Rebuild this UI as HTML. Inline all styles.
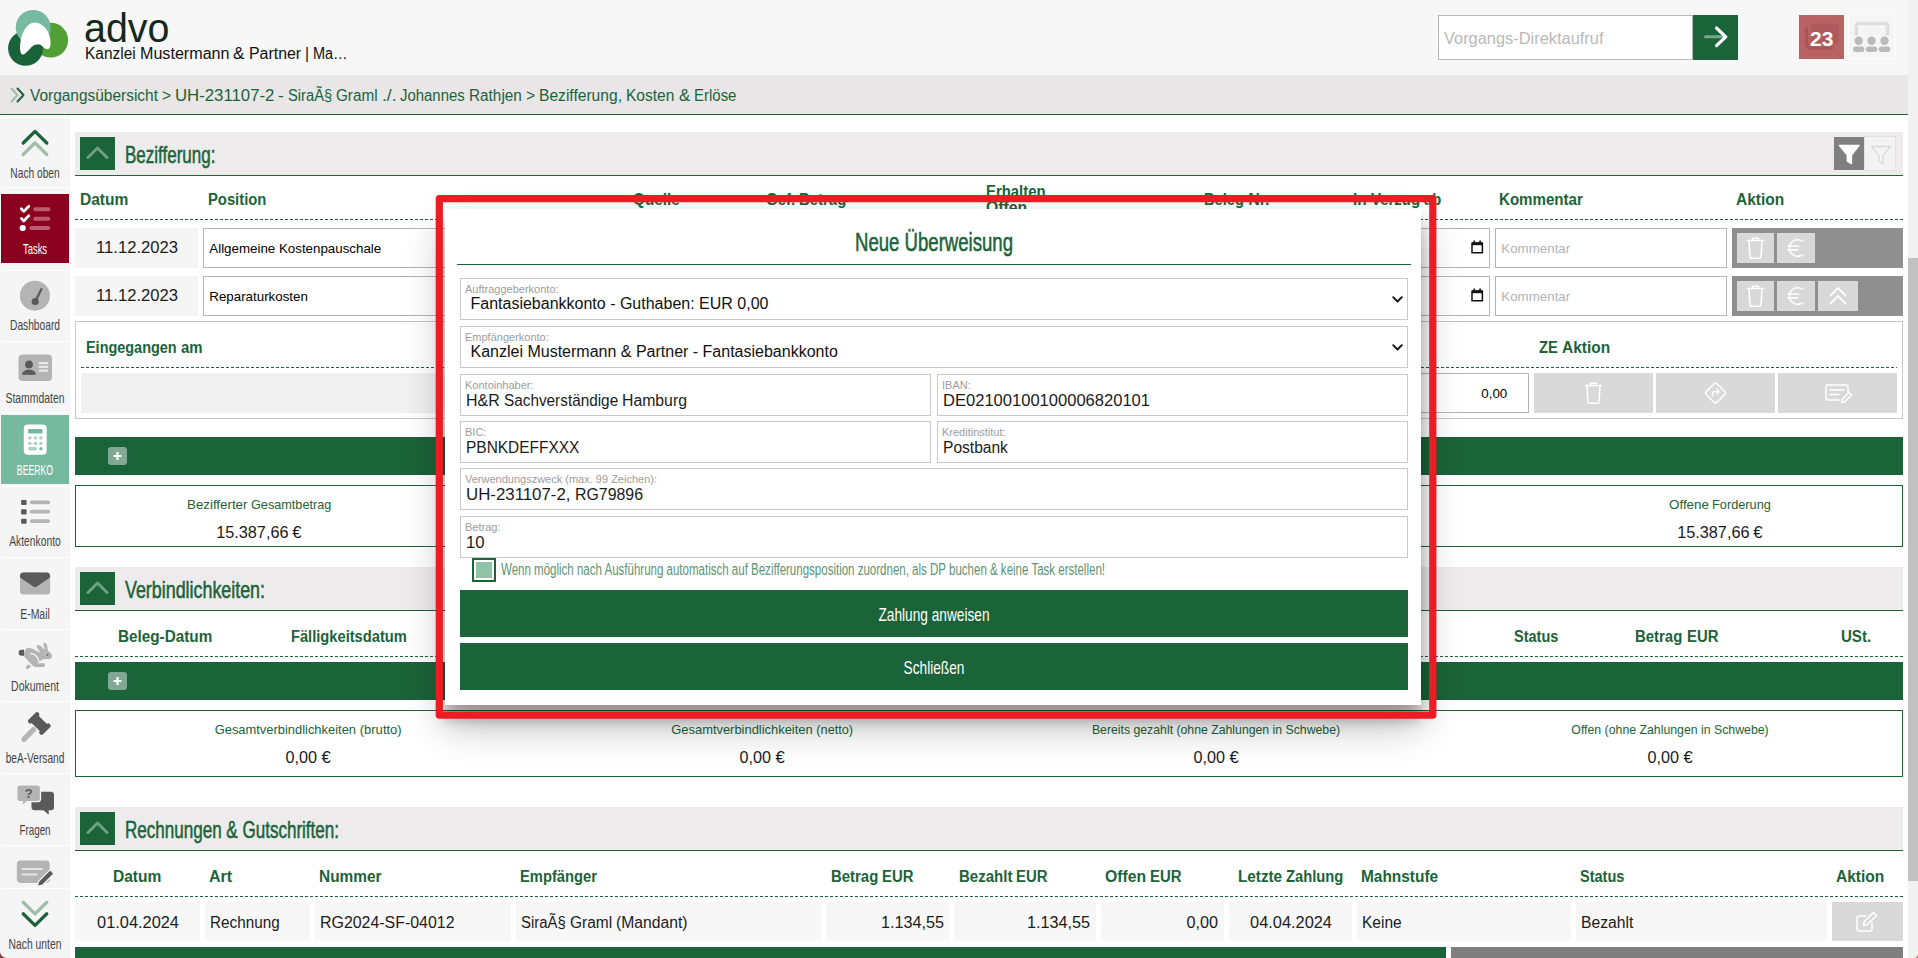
<!DOCTYPE html>
<html lang="de"><head><meta charset="utf-8"><title>advo - Bezifferung, Kosten &amp; Erlöse</title>
<style>
html,body{margin:0;padding:0;}
body{width:1918px;height:958px;overflow:hidden;background:#fff;position:relative;font-family:"Liberation Sans", sans-serif;}
.b{position:absolute;margin:0;padding:0;}
.t{position:absolute;white-space:pre;line-height:1;font-family:"Liberation Sans", sans-serif;}
.w{display:inline-block;transform-origin:0 50%;}
.dash{height:1px;background:repeating-linear-gradient(90deg,#1b6339 0 3px,transparent 3px 5px);}
.modal{background:#fff;box-shadow:0 19px 38px rgba(0,0,0,.30),0 15px 12px rgba(0,0,0,.22);}
svg{position:absolute;overflow:visible;}
</style></head>
<body>
<header class="b" style="left:0;top:0;width:1908px;height:75px;background:#f7f7f7">
<svg style="left:0;top:0" width="76" height="75" viewBox="0 0 76 75"><circle cx="50.700" cy="40.200" r="17.400" fill="#52a035"/><circle cx="25.600" cy="48.300" r="17.500" fill="#1a6338"/><circle cx="33.100" cy="27.400" r="17.400" fill="#76bba1"/><path d="M34.500 22.600C39 22.400 43.800 26 46.500 29.500C49 32.700 50.600 38 50.600 43C50.600 47 49.200 49.300 47.300 49.200C45 49.100 43.500 46.800 41.500 45.400C39.500 44 36.500 43.800 34 45.300C30.500 47.500 28.500 51 25.500 53.300C23.500 54.900 21.800 55 20.900 53C19.600 50 19.900 44 21 39C22.500 32 27 22.900 34.500 22.600Z" fill="#fff"/></svg>
<span class="t" style="left:84.3px;top:8.3px;font-size:40px;color:#14281b;transform-origin:0 50%;transform:scaleX(0.9856);">advo</span>
<span class="t" style="left:85.0px;top:45.9px;font-size:16px;color:#111;word-spacing:-0.36px;"><span class="w" style="width:50.73px;transform:scaleX(0.9667)">Kanzlei</span> <span class="w" style="width:89.50px;transform:scaleX(1.0065)">Mustermann</span> <span class="w" style="width:11.41px;transform:scaleX(1.0688)">&amp;</span> <span class="w" style="width:52.08px;transform:scaleX(0.9926)">Partner</span> <span class="w" style="width:4.02px;transform:scaleX(0.9662)">|</span> <span class="w" style="width:34.58px;transform:scaleX(0.9044)">Ma…</span></span>
<div class="b" style="left:1438px;top:15px;width:255px;height:45px;background:#fff;border:1px solid #b9b9b9;box-sizing:border-box"></div>
<span class="t" style="left:1444.3px;top:30.5px;font-size:16px;color:#b9b9b9;transform-origin:0 50%;transform:scaleX(1.0248);">Vorgangs-Direktaufruf</span>
<div class="b" style="left:1693px;top:15px;width:45px;height:45px;background:#1b6339;"><svg style="left:0px;top:0px" width="45" height="45" viewBox="0 0 45 45"><path d="M12.500 21.800H30" stroke="#fff" stroke-opacity=".42" stroke-width="3" stroke-linecap="round" fill="none"/><path d="M23.500 13L32.800 21.800L23.500 30.600" stroke="#fff" stroke-width="3.200" stroke-linecap="round" stroke-linejoin="round" fill="none"/></svg></div>
<div class="b" style="left:1799px;top:15px;width:45px;height:44px;background:#b96263;"><svg style="left:0px;top:0px" width="45" height="44" viewBox="0 0 45 44"><rect x="11.700" y="8.600" width="28.200" height="19.800" rx="3.500" fill="#ad595d"/><path d="M7.500 13.500v14.500a5 5 0 0 0 5 5h20.500" fill="none" stroke="#a95459" stroke-width="3.200" stroke-linecap="round"/><path d="M30.500 16l8-5" stroke="#b96263" stroke-width="1.300"/></svg></div>
<span class="t" style="left:1821.7px;top:27.8px;font-size:21px;font-weight:700;color:#fff;transform:translateX(-50%) scaleX(1.0000);">23</span>
<div class="b" style="left:1848px;top:14.4px;width:47px;height:45px;background:#f5f5f5;border:1px solid #fdfdfd;box-sizing:border-box"><svg style="left:-1px;top:0px" width="47" height="45" viewBox="0 0 47 45"><path d="M8.300 20.600V11a2.500 2.500 0 0 1 2.500-2.500h26.200a2.500 2.500 0 0 1 2.500 2.500v9.600" fill="none" stroke="#dedede" stroke-width="3.600"/><circle cx="10.7" cy="25.800" r="4.200" fill="#bababa"/><rect x="5.0" y="31.500" width="11.400" height="5.600" rx="2.800" fill="#bababa"/><circle cx="23.6" cy="25.800" r="4.200" fill="#bababa"/><rect x="17.9" y="31.500" width="11.400" height="5.600" rx="2.800" fill="#bababa"/><circle cx="36.5" cy="25.800" r="4.200" fill="#bababa"/><rect x="30.8" y="31.500" width="11.400" height="5.600" rx="2.800" fill="#bababa"/></svg></div>
</header>
<div class="b" style="left:0px;top:75px;width:1908px;height:39px;background:#e8e6e6;"></div>
<div class="b" style="left:0px;top:114px;width:1908px;height:1px;background:#1b6339;"></div>
<svg style="left:10px;top:87px" width="16" height="16" viewBox="0 0 16 16"><path d="M1.5 1.5L7.5 8L1.5 14.5" stroke="#9dbfaa" stroke-width="2" fill="none" stroke-linecap="round" stroke-linejoin="round"/><path d="M7.5 1.5L13.5 8L7.5 14.5" stroke="#1b6339" stroke-width="2" fill="none" stroke-linecap="round" stroke-linejoin="round"/></svg>
<span class="t" style="left:29.6px;top:87.5px;font-size:16px;color:#1b6339;word-spacing:-0.42px;"><span class="w" style="width:127.96px;transform:scaleX(0.9655)">Vorgangsübersicht</span> <span class="w" style="width:9.15px;transform:scaleX(0.9788)">&gt;</span> <span class="w" style="width:99.37px;transform:scaleX(1.0474)">UH-231107-2</span> <span class="w" style="width:5.87px;transform:scaleX(1.1010)">-</span> <span class="w" style="width:44.20px;transform:scaleX(0.9203)">SiraÃ§</span> <span class="w" style="width:41.54px;transform:scaleX(0.9536)">Graml</span> <span class="w" style="width:14.58px;transform:scaleX(1.0927)">./.</span> <span class="w" style="width:64.70px;transform:scaleX(0.9324)">Johannes</span> <span class="w" style="width:52.86px;transform:scaleX(0.9583)">Rathjen</span> <span class="w" style="width:9.15px;transform:scaleX(0.9788)">&gt;</span> <span class="w" style="width:82.97px;transform:scaleX(0.9751)">Bezifferung,</span> <span class="w" style="width:48.36px;transform:scaleX(0.9709)">Kosten</span> <span class="w" style="width:11.24px;transform:scaleX(1.0532)">&amp;</span> <span class="w" style="width:42.45px;transform:scaleX(0.9358)">Erlöse</span></span>
<nav class="b" style="left:0;top:116px;width:70px;height:842px;background:#f5f5f5">
</nav>
<div class="b" style="left:1px;top:117px;width:68px;height:1px;background:#fff;"></div>
<div class="b" style="left:1px;top:187px;width:68px;height:1px;background:#fff;"></div>
<div class="b" style="left:1px;top:270px;width:68px;height:1px;background:#fff;"></div>
<div class="b" style="left:1px;top:341px;width:68px;height:1px;background:#fff;"></div>
<div class="b" style="left:1px;top:412px;width:68px;height:1px;background:#fff;"></div>
<div class="b" style="left:1px;top:486px;width:68px;height:1px;background:#fff;"></div>
<div class="b" style="left:1px;top:557px;width:68px;height:1px;background:#fff;"></div>
<div class="b" style="left:1px;top:629px;width:68px;height:1px;background:#fff;"></div>
<div class="b" style="left:1px;top:701px;width:68px;height:1px;background:#fff;"></div>
<div class="b" style="left:1px;top:773px;width:68px;height:1px;background:#fff;"></div>
<div class="b" style="left:1px;top:845px;width:68px;height:1px;background:#fff;"></div>
<div class="b" style="left:1px;top:889px;width:68px;height:1px;background:#fff;"></div>
<div class="b" style="left:1px;top:194px;width:68px;height:69px;background:#8b001e;"></div>
<div class="b" style="left:1px;top:415px;width:68px;height:69px;background:#75b9a0;"></div>
<span class="t" style="left:35.0px;top:165.7px;font-size:14.5px;color:#444;transform:translateX(-50%) scaleX(0.7029);">Nach oben</span>
<span class="t" style="left:35.0px;top:241.7px;font-size:14.5px;color:#fff;transform:translateX(-50%) scaleX(0.6527);">Tasks</span>
<span class="t" style="left:35.0px;top:318.4px;font-size:14.5px;color:#444;transform:translateX(-50%) scaleX(0.7048);">Dashboard</span>
<span class="t" style="left:35.0px;top:390.9px;font-size:14.5px;color:#444;transform:translateX(-50%) scaleX(0.7176);">Stammdaten</span>
<span class="t" style="left:35.0px;top:462.6px;font-size:14.5px;color:#fff;transform:translateX(-50%) scaleX(0.6006);">BEERKO</span>
<span class="t" style="left:35.0px;top:534.4px;font-size:14.5px;color:#444;transform:translateX(-50%) scaleX(0.7097);">Aktenkonto</span>
<span class="t" style="left:35.0px;top:606.8px;font-size:14.5px;color:#444;transform:translateX(-50%) scaleX(0.7203);">E-Mail</span>
<span class="t" style="left:35.0px;top:678.8px;font-size:14.5px;color:#444;transform:translateX(-50%) scaleX(0.7232);">Dokument</span>
<span class="t" style="left:35.0px;top:750.8px;font-size:14.5px;color:#444;transform:translateX(-50%) scaleX(0.7001);">beA-Versand</span>
<span class="t" style="left:35.0px;top:823.0px;font-size:14.5px;color:#444;transform:translateX(-50%) scaleX(0.6790);">Fragen</span>
<svg style="left:0;top:0" width="70" height="958" viewBox="0 0 70 958"><path d="M23.2 143L35 131.4L46.800 143" fill="none" stroke="#1b6339" stroke-width="3.3" stroke-linecap="round" stroke-linejoin="round"/><path d="M23.2 154.500L35 142.900L46.800 154.500" fill="none" stroke="#9dbfaa" stroke-width="3.3" stroke-linecap="round" stroke-linejoin="round"/><path d="M21.3 208.800l2.500 2.600l5-5.200 M21.300 218.400l2.500 2.600l5-5.200" fill="none" stroke="#fff" stroke-width="2.700" stroke-linecap="round" stroke-linejoin="round"/><circle cx="22.700" cy="228" r="3.100" fill="#fff"/><path d="M35.200 209.300h13.200 M35.200 218.700h13.200 M31.400 227.900h17" stroke="#b95c70" stroke-width="4" stroke-linecap="round"/><circle cx="34.900" cy="295.700" r="15" fill="#b4b4b4"/><circle cx="35.200" cy="301.500" r="3.600" fill="#5a5a5a"/><path d="M35.200 301.500L41.300 289.300" stroke="#5a5a5a" stroke-width="2.300" stroke-linecap="round"/><rect x="18.500" y="354.600" width="33.500" height="26.400" rx="4" fill="#b4b4b4"/><circle cx="29" cy="364.400" r="3.900" fill="#5a5a5a"/><path d="M21.900 374.800a7 5.400 0 0 1 14 0z" fill="#5a5a5a"/><path d="M38.800 363.200h9.400 M38.800 366.900h9.400 M38.800 370.600h9.400" stroke="#e6e6e6" stroke-width="2.200"/><rect x="23.800" y="424.600" width="22.900" height="30.200" rx="4" fill="#fff"/><rect x="28.200" y="429" width="14.400" height="4.600" rx="1.200" fill="#74b9a0"/><circle cx="29.9" cy="437.9" r="1.700" fill="#a8d3c1"/><circle cx="35.4" cy="437.9" r="1.700" fill="#a8d3c1"/><circle cx="40.9" cy="437.9" r="1.700" fill="#a8d3c1"/><circle cx="29.9" cy="443.4" r="1.700" fill="#a8d3c1"/><circle cx="35.4" cy="443.4" r="1.700" fill="#a8d3c1"/><circle cx="40.9" cy="443.4" r="1.700" fill="#a8d3c1"/><rect x="28.200" y="447.100" width="8.800" height="3.400" rx="1.700" fill="#a8d3c1"/><circle cx="40.900" cy="448.800" r="1.700" fill="#74b9a0"/><rect x="21.100" y="499.9" width="5.500" height="5.100" rx="1" fill="#5a5a5a"/><path d="M31.700 502.3h16.500" stroke="#b4b4b4" stroke-width="3.800" stroke-linecap="round"/><rect x="21.100" y="509.3" width="5.500" height="5.100" rx="1" fill="#5a5a5a"/><path d="M31.700 511.7h16.500" stroke="#b4b4b4" stroke-width="3.800" stroke-linecap="round"/><rect x="21.100" y="518.7" width="5.500" height="5.100" rx="1" fill="#5a5a5a"/><path d="M31.700 521.1h16.500" stroke="#b4b4b4" stroke-width="3.800" stroke-linecap="round"/><rect x="20" y="572.400" width="30.100" height="22.200" rx="3.500" fill="#b4b4b4"/><path d="M20 575.900a3.500 3.500 0 0 1 3.500-3.500h23.100a3.500 3.500 0 0 1 3.500 3.500v1.500l-13.300 9.200a3 3 0 0 1-3.500 0L20 577.400z" fill="#5a5a5a"/><path d="M24.200 652.500C24.500 650 26.500 648 28.800 648.100C31 648.200 33 649 35 650L40.600 652.900C39 650.500 36.500 647.500 36.600 646C36.800 644.600 39 644.800 40.300 645.700C42 646.900 43.800 648.800 45.200 650C44.300 647.500 43 644.600 43.600 643.300C44.200 642.200 45.600 642.600 46.200 643.600C47.200 645.400 47.800 648 47.900 650.400C49.600 651.400 51.600 653.500 52 655.500C52.400 657.500 51 659.100 49 659.100L43.500 659.200L39.300 661.200L37.300 663.200L43.800 663.200C45.600 663.200 45.600 666.900 43.600 666.900L35.200 666.900C34.200 666.900 33.500 666.500 32.800 665.800L24.800 657.400C24.100 656.600 24 654 24.200 652.500Z" fill="#b4b4b4"/><path d="M26 666.400L28.400 664.300L31.200 666.400L28 669.100C26.900 669.900 25.200 668 26 666.400Z" fill="#b4b4b4"/><path d="M30.600 653.700C33.800 653.400 37.600 656 38.900 660.900" fill="none" stroke="#f5f5f5" stroke-width="1.300" stroke-linecap="round"/><path d="M24 649.700h-2.400a3 3 0 0 0 0 6h2.400z" fill="#5a5a5a"/><circle cx="47.400" cy="654.800" r=".9" fill="#5a5a5a"/><path d="M23.800 739.300L33.500 729.600" stroke="#b4b4b4" stroke-width="5.200" stroke-linecap="round"/><g transform="rotate(45 39.300 723.500)"><rect x="31.300" y="718.500" width="16" height="10" fill="#5a5a5a"/><rect x="29" y="716.500" width="4.600" height="14" rx="2" fill="#5a5a5a"/><rect x="45" y="716.500" width="4.600" height="14" rx="2" fill="#5a5a5a"/></g><path d="M34.500 791.800h16.500a3 3 0 0 1 3 3v12.500a3 3 0 0 1-3 3h-2.300v4.400l-5.200-4.400h-9a3 3 0 0 1-3-3v-12.500a3 3 0 0 1 3-3z" fill="#5a5a5a"/><path d="M19.800 784.900h17.700a3 3 0 0 1 3 3v10.800a3 3 0 0 1-3 3h-10.500l-4.600 4.600v-4.600h-2.600a3 3 0 0 1-3-3v-10.800a3 3 0 0 1 3-3z" fill="#b4b4b4" stroke="#f5f5f5" stroke-width="1.300"/><text x="28.700" y="798.300" font-family="Liberation Sans, sans-serif" font-size="13" font-weight="700" text-anchor="middle" fill="#5a5a5a">?</text><rect x="16.800" y="860.600" width="32.900" height="22.400" rx="4" fill="#b4b4b4"/><path d="M22.500 869h19.500 M22.500 874.500h14" stroke="#e4e4e4" stroke-width="2.200" stroke-linecap="round"/><path d="M37.300 886.300l1.300-5l10.400-10.400a1.600 1.600 0 0 1 2.300 0l1.600 1.600a1.600 1.600 0 0 1 0 2.300l-10.400 10.400z" fill="#5a5a5a" stroke="#f5f5f5" stroke-width="1.200"/></svg>
<div class="b" style="left:0;top:889px;width:70px;height:69px;background:#f5f5f5"></div><div class="b" style="left:1px;top:888px;width:68px;height:1px;background:#fff"></div><svg style="left:0;top:889px" width="70" height="69" viewBox="0 889 70 69"><path d="M23.200 902.300L35 913.900L46.800 902.300" fill="none" stroke="#9dbfaa" stroke-width="3.300" stroke-linecap="round" stroke-linejoin="round"/><path d="M23.200 913.800L35 925.400L46.800 913.800" fill="none" stroke="#1b6339" stroke-width="3.300" stroke-linecap="round" stroke-linejoin="round"/></svg>
<span class="t" style="left:35.0px;top:936.6px;font-size:14.5px;color:#444;transform:translateX(-50%) scaleX(0.7119);">Nach unten</span>
<main>
<div class="b" style="left:75px;top:132px;width:1828px;height:43px;background:#edebeb;"></div>
<div class="b" style="left:75px;top:175px;width:1828px;height:1px;background:#1b6339;"></div>
<div class="b" style="left:80px;top:137px;width:35px;height:33px;background:#1b6339;"><svg style="left:0px;top:0px" width="35" height="33" viewBox="0 0 35 33"><path d="M8 20.5L17.5 11L27 20.5" stroke="#6da083" stroke-width="3" fill="none" stroke-linecap="round" stroke-linejoin="round"/></svg></div>
<span class="t" style="left:124.5px;top:142.5px;font-size:24px;color:#1b6339;transform-origin:0 50%;transform:scaleX(0.7082);-webkit-text-stroke:.55px #1b6339">Bezifferung:</span>
<div class="b" style="left:1834px;top:137px;width:30px;height:33px;background:#7f7f7f;"><svg style="left:0px;top:0px" width="30" height="33" viewBox="0 0 30 33"><path d="M5.5 8.5h19.5l-7.6 9.5v8.5l-4 -2.5v-6z" fill="#fff" stroke="#fff" stroke-width="1.5" stroke-linejoin="round"/></svg></div>
<div class="b" style="left:1864px;top:136px;width:32px;height:35px;background:#f3f3f3;border:1px solid #e2e2e2;box-sizing:border-box"><svg style="left:0px;top:0px" width="33" height="35" viewBox="0 0 33 35"><path d="M6.5 9.5h19l-7.5 9.3v8l-4 -2.4v-5.6z" fill="none" stroke="#d9d9d9" stroke-width="1.3" stroke-linejoin="round"/></svg></div>
<span class="t" style="left:79.9px;top:191.5px;font-size:16px;font-weight:700;color:#1b6339;transform-origin:0 50%;transform:scaleX(0.9714);">Datum</span>
<span class="t" style="left:208.2px;top:191.5px;font-size:16px;font-weight:700;color:#1b6339;transform-origin:0 50%;transform:scaleX(0.9242);">Position</span>
<span class="t" style="left:633.4px;top:191.5px;font-size:16px;font-weight:700;color:#1b6339;transform-origin:0 50%;transform:scaleX(0.9588);">Quelle</span>
<span class="t" style="left:766.4px;top:191.5px;font-size:16px;font-weight:700;color:#1b6339;word-spacing:-0.56px;"><span class="w" style="width:29.16px;transform:scaleX(0.9367)">Gef.</span> <span class="w" style="width:47.28px;transform:scaleX(0.9328)">Betrag</span></span>
<span class="t" style="left:1204.4px;top:191.5px;font-size:16px;font-weight:700;color:#1b6339;word-spacing:-0.56px;"><span class="w" style="width:39.94px;transform:scaleX(0.9165)">Beleg</span> <span class="w" style="width:21.34px;transform:scaleX(1.0000)">Nr.</span></span>
<span class="t" style="left:1353.4px;top:191.5px;font-size:16px;font-weight:700;color:#1b6339;word-spacing:-0.56px;"><span class="w" style="width:13.66px;transform:scaleX(0.9604)">In</span> <span class="w" style="width:49.19px;transform:scaleX(0.9375)">Verzug</span> <span class="w" style="width:17.20px;transform:scaleX(0.9213)">ab</span></span>
<span class="t" style="left:1499.4px;top:191.5px;font-size:16px;font-weight:700;color:#1b6339;transform-origin:0 50%;transform:scaleX(0.9434);">Kommentar</span>
<span class="t" style="left:1736.4px;top:191.5px;font-size:16px;font-weight:700;color:#1b6339;transform-origin:0 50%;transform:scaleX(0.9677);">Aktion</span>
<span class="t" style="left:985.5px;top:184.0px;font-size:16px;font-weight:700;color:#1b6339;transform-origin:0 50%;transform:scaleX(0.9307);">Erhalten</span>
<span class="t" style="left:985.5px;top:200.0px;font-size:16px;font-weight:700;color:#1b6339;transform-origin:0 50%;transform:scaleX(0.9843);">Offen</span>
<div class="b dash" style="left:75px;top:219px;width:1828px"></div>
<div class="b" style="left:75px;top:228px;width:123px;height:40px;background:#f5f5f5;"></div>
<span class="t" style="left:136.5px;top:240.0px;font-size:16px;color:#1b1b1b;transform:translateX(-50%) scaleX(1.0368);">11.12.2023</span>
<div class="b" style="left:203px;top:228px;width:430px;height:40px;background:#fff;border:1px solid #b4b4b4;box-sizing:border-box"></div>
<span class="t" style="left:209.3px;top:242.1px;font-size:13.33px;color:#000;transform-origin:0 50%;transform:scaleX(1.0000);">Allgemeine Kostenpauschale</span>
<div class="b" style="left:1350px;top:228px;width:140px;height:40px;background:#fff;border:1px solid #b4b4b4;box-sizing:border-box"><svg style="left:120px;top:10.5px" width="13" height="14" viewBox="0 0 13 14"><path d="M1 3.300h10.400v9.400h-10.400z" fill="none" stroke="#111" stroke-width="1.500"/><path d="M1 2.200h10.400v3h-10.400z" fill="#111"/><path d="M3.300 0.600v2 M9.100 0.600v2" stroke="#111" stroke-width="1.600"/></svg></div>
<div class="b" style="left:1495px;top:228px;width:232px;height:40px;background:#fff;border:1px solid #b4b4b4;box-sizing:border-box"></div>
<span class="t" style="left:1501.3px;top:242.1px;font-size:13.33px;color:#b3b3b3;transform-origin:0 50%;transform:scaleX(1.0000);">Kommentar</span>
<div class="b" style="left:1732px;top:228px;width:171px;height:40px;background:#8f8f8f;"></div>
<div class="b" style="left:1737px;top:233px;width:37px;height:30px;background:#d8d8d8;"><svg style="left:0px;top:0px" width="37" height="30" viewBox="0 0 37 30"><path d="M10.5 7.5h16 M15.5 7.5v-2.2h6v2.2 M12.0 7.5l1 16.5a1.5 1.5 0 0 0 1.5 1.3h8a1.5 1.5 0 0 0 1.5 -1.3l1 -16.5" fill="none" stroke="#fff" stroke-width="1.5" stroke-linecap="round" stroke-linejoin="round"/></svg></div>
<div class="b" style="left:1777px;top:233px;width:38px;height:30px;background:#d8d8d8;"><svg style="left:0px;top:0px" width="38" height="30" viewBox="0 0 38 30"><path d="M25.5 8.2a8.3 8.3 0 1 0 0 13.6 M11 13h11 M11 17h10" fill="none" stroke="#fff" stroke-width="1.6" stroke-linecap="round"/></svg></div>
<div class="b" style="left:75px;top:276px;width:123px;height:40px;background:#f5f5f5;"></div>
<span class="t" style="left:136.5px;top:288.0px;font-size:16px;color:#1b1b1b;transform:translateX(-50%) scaleX(1.0368);">11.12.2023</span>
<div class="b" style="left:203px;top:276px;width:430px;height:40px;background:#fff;border:1px solid #b4b4b4;box-sizing:border-box"></div>
<span class="t" style="left:209.3px;top:290.1px;font-size:13.33px;color:#000;transform-origin:0 50%;transform:scaleX(1.0000);">Reparaturkosten</span>
<div class="b" style="left:1350px;top:276px;width:140px;height:40px;background:#fff;border:1px solid #b4b4b4;box-sizing:border-box"><svg style="left:120px;top:10.5px" width="13" height="14" viewBox="0 0 13 14"><path d="M1 3.300h10.400v9.400h-10.400z" fill="none" stroke="#111" stroke-width="1.500"/><path d="M1 2.200h10.400v3h-10.400z" fill="#111"/><path d="M3.300 0.600v2 M9.100 0.600v2" stroke="#111" stroke-width="1.600"/></svg></div>
<div class="b" style="left:1495px;top:276px;width:232px;height:40px;background:#fff;border:1px solid #b4b4b4;box-sizing:border-box"></div>
<span class="t" style="left:1501.3px;top:290.1px;font-size:13.33px;color:#b3b3b3;transform-origin:0 50%;transform:scaleX(1.0000);">Kommentar</span>
<div class="b" style="left:1732px;top:276px;width:171px;height:40px;background:#8f8f8f;"></div>
<div class="b" style="left:1737px;top:281px;width:37px;height:30px;background:#d8d8d8;"><svg style="left:0px;top:0px" width="37" height="30" viewBox="0 0 37 30"><path d="M10.5 7.5h16 M15.5 7.5v-2.2h6v2.2 M12.0 7.5l1 16.5a1.5 1.5 0 0 0 1.5 1.3h8a1.5 1.5 0 0 0 1.5 -1.3l1 -16.5" fill="none" stroke="#fff" stroke-width="1.5" stroke-linecap="round" stroke-linejoin="round"/></svg></div>
<div class="b" style="left:1777px;top:281px;width:38px;height:30px;background:#d8d8d8;"><svg style="left:0px;top:0px" width="38" height="30" viewBox="0 0 38 30"><path d="M25.5 8.2a8.3 8.3 0 1 0 0 13.6 M11 13h11 M11 17h10" fill="none" stroke="#fff" stroke-width="1.6" stroke-linecap="round"/></svg></div>
<div class="b" style="left:1818px;top:281px;width:40px;height:30px;background:#d8d8d8;"><svg style="left:0px;top:0px" width="40" height="30" viewBox="0 0 40 30"><path d="M12.5 14.5L20 7L27.5 14.5 M12.5 22.5L20 15L27.5 22.5" fill="none" stroke="#fff" stroke-width="1.8" stroke-linecap="round" stroke-linejoin="round"/></svg></div>
<div class="b" style="left:75px;top:321px;width:1828px;height:98px;background:#fff;border:1px solid #c6c6c6;box-sizing:border-box"></div>
<span class="t" style="left:86.3px;top:339.8px;font-size:16px;font-weight:700;color:#1b6339;word-spacing:-0.56px;"><span class="w" style="width:90.59px;transform:scaleX(0.9019)">Eingegangen</span> <span class="w" style="width:21.53px;transform:scaleX(0.9311)">am</span></span>
<span class="t" style="left:1539.0px;top:339.8px;font-size:16px;font-weight:700;color:#1b6339;word-spacing:-0.56px;"><span class="w" style="width:18.89px;transform:scaleX(0.9236)">ZE</span> <span class="w" style="width:48.17px;transform:scaleX(0.9677)">Aktion</span></span>
<div class="b dash" style="left:81px;top:367px;width:1816px"></div>
<div class="b" style="left:81px;top:373px;width:400px;height:40px;background:#f1f1f1;"></div>
<div class="b" style="left:1400px;top:373px;width:129px;height:40px;background:#fff;border:1px solid #b4b4b4;box-sizing:border-box"></div>
<span class="t" style="left:1507.3px;top:386.9px;font-size:13.33px;color:#000;transform-origin:100% 50%;transform:translateX(-100%) scaleX(1.0000);">0,00</span>
<div class="b" style="left:1534px;top:373px;width:119px;height:40px;background:#d9d9d9;"><svg style="left:0px;top:0px" width="119" height="40" viewBox="0 0 119 40"><path d="M51.5 12.5h16 M56.5 12.5v-2.2h6v2.2 M53.0 12.5l1 16.5a1.5 1.5 0 0 0 1.5 1.3h8a1.5 1.5 0 0 0 1.5 -1.3l1 -16.5" fill="none" stroke="#fff" stroke-width="1.5" stroke-linecap="round" stroke-linejoin="round"/></svg></div>
<div class="b" style="left:1656px;top:373px;width:119px;height:40px;background:#d9d9d9;"><svg style="left:0px;top:0px" width="119" height="40" viewBox="0 0 119 40"><rect x="52" y="12.5" width="15" height="15" rx="2" transform="rotate(45 59.5 20)" fill="none" stroke="#fff" stroke-width="1.5"/><path d="M56.5 23v-2.5a2 2 0 0 1 2-2h4.5 M61 16l2.2 2.5l-2.2 2.5" fill="none" stroke="#fff" stroke-width="1.4" stroke-linecap="round" stroke-linejoin="round"/></svg></div>
<div class="b" style="left:1778px;top:373px;width:119px;height:40px;background:#d9d9d9;"><svg style="left:0px;top:0px" width="119" height="40" viewBox="0 0 119 40"><path d="M70 19v-5a2 2 0 0 0-2-2h-18a2 2 0 0 0-2 2v11a2 2 0 0 0 2 2h11" fill="none" stroke="#fff" stroke-width="1.5" stroke-linecap="round"/><path d="M52 17h14 M52 21.5h9" stroke="#fff" stroke-width="1.5" stroke-linecap="round"/><path d="M63.5 29.5l1-3.5l6.5-6.5l2.5 2.5l-6.5 6.5z" fill="none" stroke="#fff" stroke-width="1.4" stroke-linejoin="round"/></svg></div>
<div class="b" style="left:75px;top:437px;width:1828px;height:38px;background:#1b6339;"></div>
<div class="b" style="left:108px;top:447px;width:19px;height:18px;background:rgba(255,255,255,.45);border-radius:3px"><svg style="left:0px;top:0px" width="19" height="18" viewBox="0 0 19 18"><path d="M9.5 5v8 M5.5 9h8" stroke="#fff" stroke-width="2.2" stroke-linecap="butt"/></svg></div>
<div class="b" style="left:75px;top:485px;width:1828px;height:62px;background:#fff;border:1px solid #1b6339;box-sizing:border-box"></div>
<span class="t" style="left:259.0px;top:497.8px;font-size:13px;color:#1b6339;word-spacing:-0.30px;transform:translateX(-50%);"><span class="w" style="width:60.44px;transform:scaleX(1.0241)">Bezifferter</span> <span class="w" style="width:80.25px;transform:scaleX(0.9742)">Gesamtbetrag</span></span>
<span class="t" style="left:259.0px;top:524.7px;font-size:16px;color:#1b1b1b;word-spacing:-0.36px;transform:translateX(-50%);"><span class="w" style="width:72.38px;transform:scaleX(1.0167)">15.387,66</span> <span class="w" style="width:9.28px;transform:scaleX(1.0421)">€</span></span>
<span class="t" style="left:1719.6px;top:497.8px;font-size:13px;color:#1b6339;word-spacing:-0.30px;transform:translateX(-50%);"><span class="w" style="width:39.78px;transform:scaleX(1.0254)">Offene</span> <span class="w" style="width:58.78px;transform:scaleX(0.9799)">Forderung</span></span>
<span class="t" style="left:1719.6px;top:524.7px;font-size:16px;color:#1b1b1b;word-spacing:-0.36px;transform:translateX(-50%);"><span class="w" style="width:72.38px;transform:scaleX(1.0167)">15.387,66</span> <span class="w" style="width:9.28px;transform:scaleX(1.0421)">€</span></span>
<div class="b" style="left:75px;top:567px;width:1828px;height:43px;background:#edebeb;"></div>
<div class="b" style="left:75px;top:610px;width:1828px;height:1px;background:#1b6339;"></div>
<div class="b" style="left:80px;top:572px;width:35px;height:33px;background:#1b6339;"><svg style="left:0px;top:0px" width="35" height="33" viewBox="0 0 35 33"><path d="M8 20.5L17.5 11L27 20.5" stroke="#6da083" stroke-width="3" fill="none" stroke-linecap="round" stroke-linejoin="round"/></svg></div>
<span class="t" style="left:124.5px;top:577.5px;font-size:24px;color:#1b6339;transform-origin:0 50%;transform:scaleX(0.7442);-webkit-text-stroke:.55px #1b6339">Verbindlichkeiten:</span>
<span class="t" style="left:118.0px;top:628.5px;font-size:16px;font-weight:700;color:#1b6339;transform-origin:0 50%;transform:scaleX(0.9552);">Beleg-Datum</span>
<span class="t" style="left:290.9px;top:628.5px;font-size:16px;font-weight:700;color:#1b6339;transform-origin:0 50%;transform:scaleX(0.9170);">Fälligkeitsdatum</span>
<span class="t" style="left:1514.0px;top:628.5px;font-size:16px;font-weight:700;color:#1b6339;transform-origin:0 50%;transform:scaleX(0.9080);">Status</span>
<span class="t" style="left:1635.4px;top:628.5px;font-size:16px;font-weight:700;color:#1b6339;word-spacing:-0.56px;"><span class="w" style="width:47.28px;transform:scaleX(0.9328)">Betrag</span> <span class="w" style="width:31.38px;transform:scaleX(0.9288)">EUR</span></span>
<span class="t" style="left:1841.4px;top:628.5px;font-size:16px;font-weight:700;color:#1b6339;transform-origin:0 50%;transform:scaleX(0.9395);">USt.</span>
<div class="b dash" style="left:75px;top:656px;width:1828px"></div>
<div class="b" style="left:75px;top:662px;width:1828px;height:38px;background:#1b6339;"></div>
<div class="b" style="left:108px;top:672px;width:19px;height:18px;background:rgba(255,255,255,.45);border-radius:3px"><svg style="left:0px;top:0px" width="19" height="18" viewBox="0 0 19 18"><path d="M9.5 5v8 M5.5 9h8" stroke="#fff" stroke-width="2.2" stroke-linecap="butt"/></svg></div>
<div class="b" style="left:75px;top:710px;width:1828px;height:66.5px;background:#fff;border:1px solid #1b6339;box-sizing:border-box"></div>
<span class="t" style="left:308.0px;top:723.0px;font-size:13px;color:#1b6339;word-spacing:-0.30px;transform:translateX(-50%);"><span class="w" style="width:141.31px;transform:scaleX(0.9926)">Gesamtverbindlichkeiten</span> <span class="w" style="width:42.03px;transform:scaleX(1.0030)">(brutto)</span></span>
<span class="t" style="left:308.0px;top:749.9px;font-size:16px;color:#1b1b1b;word-spacing:-0.36px;transform:translateX(-50%);"><span class="w" style="width:31.48px;transform:scaleX(1.0110)">0,00</span> <span class="w" style="width:9.28px;transform:scaleX(1.0421)">€</span></span>
<span class="t" style="left:762.0px;top:723.0px;font-size:13px;color:#1b6339;word-spacing:-0.30px;transform:translateX(-50%);"><span class="w" style="width:141.31px;transform:scaleX(0.9926)">Gesamtverbindlichkeiten</span> <span class="w" style="width:36.75px;transform:scaleX(0.9780)">(netto)</span></span>
<span class="t" style="left:762.0px;top:749.9px;font-size:16px;color:#1b1b1b;word-spacing:-0.36px;transform:translateX(-50%);"><span class="w" style="width:31.48px;transform:scaleX(1.0110)">0,00</span> <span class="w" style="width:9.28px;transform:scaleX(1.0421)">€</span></span>
<span class="t" style="left:1216.0px;top:723.0px;font-size:13px;color:#1b6339;transform:translateX(-50%) scaleX(0.9435);">Bereits gezahlt (ohne Zahlungen in Schwebe)</span>
<span class="t" style="left:1216.0px;top:749.9px;font-size:16px;color:#1b1b1b;word-spacing:-0.36px;transform:translateX(-50%);"><span class="w" style="width:31.48px;transform:scaleX(1.0110)">0,00</span> <span class="w" style="width:9.28px;transform:scaleX(1.0421)">€</span></span>
<span class="t" style="left:1670.0px;top:723.0px;font-size:13px;color:#1b6339;transform:translateX(-50%) scaleX(0.9457);">Offen (ohne Zahlungen in Schwebe)</span>
<span class="t" style="left:1670.0px;top:749.9px;font-size:16px;color:#1b1b1b;word-spacing:-0.36px;transform:translateX(-50%);"><span class="w" style="width:31.48px;transform:scaleX(1.0110)">0,00</span> <span class="w" style="width:9.28px;transform:scaleX(1.0421)">€</span></span>
<div class="b" style="left:75px;top:807px;width:1828px;height:43px;background:#edebeb;"></div>
<div class="b" style="left:75px;top:850px;width:1828px;height:1px;background:#1b6339;"></div>
<div class="b" style="left:80px;top:812px;width:35px;height:33px;background:#1b6339;"><svg style="left:0px;top:0px" width="35" height="33" viewBox="0 0 35 33"><path d="M8 20.5L17.5 11L27 20.5" stroke="#6da083" stroke-width="3" fill="none" stroke-linecap="round" stroke-linejoin="round"/></svg></div>
<span class="t" style="left:124.5px;top:817.5px;font-size:24px;color:#1b6339;transform-origin:0 50%;transform:scaleX(0.7097);-webkit-text-stroke:.55px #1b6339">Rechnungen &amp; Gutschriften:</span>
<span class="t" style="left:113.1px;top:868.5px;font-size:16px;font-weight:700;color:#1b6339;transform-origin:0 50%;transform:scaleX(0.9714);">Datum</span>
<span class="t" style="left:209.2px;top:868.5px;font-size:16px;font-weight:700;color:#1b6339;transform-origin:0 50%;transform:scaleX(0.9966);">Art</span>
<span class="t" style="left:319.4px;top:868.5px;font-size:16px;font-weight:700;color:#1b6339;transform-origin:0 50%;transform:scaleX(0.9632);">Nummer</span>
<span class="t" style="left:520.4px;top:868.5px;font-size:16px;font-weight:700;color:#1b6339;transform-origin:0 50%;transform:scaleX(0.9217);">Empfänger</span>
<span class="t" style="left:831.2px;top:868.5px;font-size:16px;font-weight:700;color:#1b6339;word-spacing:-0.56px;"><span class="w" style="width:47.28px;transform:scaleX(0.9328)">Betrag</span> <span class="w" style="width:31.38px;transform:scaleX(0.9288)">EUR</span></span>
<span class="t" style="left:959.0px;top:868.5px;font-size:16px;font-weight:700;color:#1b6339;word-spacing:-0.56px;"><span class="w" style="width:53.41px;transform:scaleX(0.9385)">Bezahlt</span> <span class="w" style="width:31.38px;transform:scaleX(0.9288)">EUR</span></span>
<span class="t" style="left:1105.1px;top:868.5px;font-size:16px;font-weight:700;color:#1b6339;word-spacing:-0.56px;"><span class="w" style="width:41.12px;transform:scaleX(0.9843)">Offen</span> <span class="w" style="width:31.38px;transform:scaleX(0.9288)">EUR</span></span>
<span class="t" style="left:1237.6px;top:868.5px;font-size:16px;font-weight:700;color:#1b6339;word-spacing:-0.56px;"><span class="w" style="width:44.11px;transform:scaleX(0.9540)">Letzte</span> <span class="w" style="width:57.28px;transform:scaleX(0.9206)">Zahlung</span></span>
<span class="t" style="left:1360.8px;top:868.5px;font-size:16px;font-weight:700;color:#1b6339;transform-origin:0 50%;transform:scaleX(0.9645);">Mahnstufe</span>
<span class="t" style="left:1580.4px;top:868.5px;font-size:16px;font-weight:700;color:#1b6339;transform-origin:0 50%;transform:scaleX(0.9080);">Status</span>
<span class="t" style="left:1836.3px;top:868.5px;font-size:16px;font-weight:700;color:#1b6339;transform-origin:0 50%;transform:scaleX(0.9677);">Aktion</span>
<div class="b dash" style="left:75px;top:896px;width:1828px"></div>
<div class="b" style="left:75px;top:902px;width:125px;height:39px;background:#f7f7f7;"></div>
<div class="b" style="left:205px;top:902px;width:104.5px;height:39px;background:#f7f7f7;"></div>
<div class="b" style="left:315px;top:902px;width:195.5px;height:39px;background:#f7f7f7;"></div>
<div class="b" style="left:516px;top:902px;width:305px;height:39px;background:#f7f7f7;"></div>
<div class="b" style="left:826px;top:902px;width:122.5px;height:39px;background:#f7f7f7;"></div>
<div class="b" style="left:954px;top:902px;width:141.5px;height:39px;background:#f7f7f7;"></div>
<div class="b" style="left:1101px;top:902px;width:123px;height:39px;background:#f7f7f7;"></div>
<div class="b" style="left:1229px;top:902px;width:123px;height:39px;background:#f7f7f7;"></div>
<div class="b" style="left:1357px;top:902px;width:214px;height:39px;background:#f7f7f7;"></div>
<div class="b" style="left:1576px;top:902px;width:251px;height:39px;background:#f7f7f7;"></div>
<div class="b" style="left:1832px;top:902px;width:71px;height:39px;background:#d9d9d9;"><svg style="left:0px;top:0px" width="71" height="39" viewBox="0 0 71 39"><path d="M40 21v6a2 2 0 0 1-2 2h-11a2 2 0 0 1-2-2v-11a2 2 0 0 1 2-2h7" fill="none" stroke="#fff" stroke-width="1.5" stroke-linecap="round"/><path d="M31.5 23.5l1-4l9-9l3 3l-9 9z" fill="none" stroke="#fff" stroke-width="1.5" stroke-linejoin="round"/></svg></div>
<span class="t" style="left:137.5px;top:914.5px;font-size:16px;color:#1b1b1b;transform:translateX(-50%) scaleX(1.0215);">01.04.2024</span>
<span class="t" style="left:210.0px;top:914.5px;font-size:16px;color:#1b1b1b;transform-origin:0 50%;transform:scaleX(0.9544);">Rechnung</span>
<span class="t" style="left:320.0px;top:914.5px;font-size:16px;color:#1b1b1b;transform-origin:0 50%;transform:scaleX(0.9950);">RG2024-SF-04012</span>
<span class="t" style="left:521.0px;top:914.5px;font-size:16px;color:#1b1b1b;word-spacing:-0.36px;"><span class="w" style="width:44.86px;transform:scaleX(0.9340)">SiraÃ§</span> <span class="w" style="width:42.16px;transform:scaleX(0.9677)">Graml</span> <span class="w" style="width:71.52px;transform:scaleX(0.9807)">(Mandant)</span></span>
<span class="t" style="left:943.6px;top:914.5px;font-size:16px;color:#1b1b1b;transform-origin:100% 50%;transform:translateX(-100%) scaleX(1.0130);">1.134,55</span>
<span class="t" style="left:1089.7px;top:914.5px;font-size:16px;color:#1b1b1b;transform-origin:100% 50%;transform:translateX(-100%) scaleX(1.0130);">1.134,55</span>
<span class="t" style="left:1218.0px;top:914.5px;font-size:16px;color:#1b1b1b;transform-origin:100% 50%;transform:translateX(-100%) scaleX(1.0110);">0,00</span>
<span class="t" style="left:1290.5px;top:914.5px;font-size:16px;color:#1b1b1b;transform:translateX(-50%) scaleX(1.0215);">04.04.2024</span>
<span class="t" style="left:1362.0px;top:914.5px;font-size:16px;color:#1b1b1b;transform-origin:0 50%;transform:scaleX(0.9691);">Keine</span>
<span class="t" style="left:1581.0px;top:914.5px;font-size:16px;color:#1b1b1b;transform-origin:0 50%;transform:scaleX(0.9798);">Bezahlt</span>
<div class="b" style="left:75px;top:947px;width:1371px;height:11px;background:#1b6339;"></div>
<div class="b" style="left:1451px;top:947px;width:452px;height:11px;background:#7f7f7f;"></div>
</main>
<div class="b" style="left:1908px;top:0px;width:10px;height:958px;background:#f1f1f1;"></div>
<div class="b" style="left:1908px;top:258px;width:10px;height:623px;background:#c1c1c1;"></div>
<svg style="left:0;top:948px" width="10" height="10" viewBox="0 0 10 10"><path d="M0 10V3.500A6.500 6.500 0 0 0 6.500 10Z" fill="#7b3d38"/></svg>
<svg style="left:1908px;top:948px" width="10" height="10" viewBox="0 0 10 10"><path d="M10 10V5.500A4.500 4.500 0 0 1 5.500 10Z" fill="#b08878"/></svg>
<div class="b modal" role="dialog" aria-label="Neue Überweisung" style="left:445px;top:209px;width:976px;height:496px">
<span class="t" style="left:489.3px;top:20.5px;font-size:25px;color:#1b6339;transform:translateX(-50%) scaleX(0.7431);-webkit-text-stroke:.55px #1b6339">Neue Überweisung</span>
<div class="b" style="left:12px;top:55px;width:954px;height:1px;background:#1b6339;"></div>
<div class="b" style="left:15px;top:69px;width:948px;height:42px;background:#fff;border:1px solid #c9c9c9;box-sizing:border-box"></div>
<span class="t" style="left:20.0px;top:74.7px;font-size:11px;color:#9d9d9d;transform-origin:0 50%;transform:scaleX(1.0000);">Auftraggeberkonto:</span>
<span class="t" style="left:25.5px;top:87.2px;font-size:16px;color:#111;transform-origin:0 50%;transform:scaleX(1.0000);">Fantasiebankkonto - Guthaben: EUR 0,00</span>
<div class="b" style="left:947px;top:87px;width:11px;height:7px;"><svg style="left:0px;top:0px" width="11" height="7" viewBox="0 0 11 7"><path d="M1.2 1.2L5.5 5.5L9.8 1.2" fill="none" stroke="#111" stroke-width="1.9" stroke-linecap="round" stroke-linejoin="round"/></svg></div>
<div class="b" style="left:15px;top:117px;width:948px;height:42px;background:#fff;border:1px solid #c9c9c9;box-sizing:border-box"></div>
<span class="t" style="left:20.0px;top:122.7px;font-size:11px;color:#9d9d9d;transform-origin:0 50%;transform:scaleX(1.0000);">Empfängerkonto:</span>
<span class="t" style="left:25.5px;top:135.2px;font-size:16px;color:#111;transform-origin:0 50%;transform:scaleX(1.0000);">Kanzlei Mustermann &amp; Partner - Fantasiebankkonto</span>
<div class="b" style="left:947px;top:135px;width:11px;height:7px;"><svg style="left:0px;top:0px" width="11" height="7" viewBox="0 0 11 7"><path d="M1.2 1.2L5.5 5.5L9.8 1.2" fill="none" stroke="#111" stroke-width="1.9" stroke-linecap="round" stroke-linejoin="round"/></svg></div>
<div class="b" style="left:15px;top:165px;width:471px;height:42px;background:#fff;border:1px solid #c9c9c9;box-sizing:border-box"></div>
<span class="t" style="left:20.0px;top:170.7px;font-size:11px;color:#9d9d9d;transform-origin:0 50%;transform:scaleX(1.0000);">Kontoinhaber:</span>
<span class="t" style="left:21.0px;top:183.8px;font-size:16px;color:#1b1b1b;word-spacing:-0.36px;"><span class="w" style="width:33.64px;transform:scaleX(0.9958)">H&amp;R</span> <span class="w" style="width:114.17px;transform:scaleX(0.9579)">Sachverständige</span> <span class="w" style="width:64.94px;transform:scaleX(0.9867)">Hamburg</span></span>
<div class="b" style="left:492px;top:165px;width:471px;height:42px;background:#fff;border:1px solid #c9c9c9;box-sizing:border-box"></div>
<span class="t" style="left:497.0px;top:170.7px;font-size:11px;color:#9d9d9d;transform-origin:0 50%;transform:scaleX(1.0000);">IBAN:</span>
<span class="t" style="left:498.0px;top:183.8px;font-size:16px;color:#1b1b1b;transform-origin:0 50%;transform:scaleX(1.0340);">DE02100100100006820101</span>
<div class="b" style="left:15px;top:212px;width:471px;height:41.5px;background:#fff;border:1px solid #c9c9c9;box-sizing:border-box"></div>
<span class="t" style="left:20.0px;top:217.7px;font-size:11px;color:#9d9d9d;transform-origin:0 50%;transform:scaleX(1.0000);">BIC:</span>
<span class="t" style="left:21.0px;top:230.8px;font-size:16px;color:#1b1b1b;transform-origin:0 50%;transform:scaleX(0.9666);">PBNKDEFFXXX</span>
<div class="b" style="left:492px;top:212px;width:471px;height:41.5px;background:#fff;border:1px solid #c9c9c9;box-sizing:border-box"></div>
<span class="t" style="left:497.0px;top:217.7px;font-size:11px;color:#9d9d9d;transform-origin:0 50%;transform:scaleX(1.0000);">Kreditinstitut:</span>
<span class="t" style="left:498.0px;top:230.8px;font-size:16px;color:#1b1b1b;transform-origin:0 50%;transform:scaleX(0.9726);">Postbank</span>
<div class="b" style="left:15px;top:259px;width:948px;height:41.5px;background:#fff;border:1px solid #c9c9c9;box-sizing:border-box"></div>
<span class="t" style="left:20.0px;top:264.7px;font-size:11px;color:#9d9d9d;transform-origin:0 50%;transform:scaleX(1.0000);">Verwendungszweck (max. 99 Zeichen):</span>
<span class="t" style="left:21.0px;top:277.8px;font-size:16px;color:#1b1b1b;word-spacing:-0.36px;"><span class="w" style="width:104.47px;transform:scaleX(1.0519)">UH-231107-2,</span> <span class="w" style="width:68.00px;transform:scaleX(0.9927)">RG79896</span></span>
<div class="b" style="left:15px;top:307px;width:948px;height:41.5px;background:#fff;border:1px solid #c9c9c9;box-sizing:border-box"></div>
<span class="t" style="left:20.0px;top:312.7px;font-size:11px;color:#9d9d9d;transform-origin:0 50%;transform:scaleX(1.0000);">Betrag:</span>
<span class="t" style="left:21.0px;top:325.8px;font-size:16px;color:#1b1b1b;transform-origin:0 50%;transform:scaleX(1.0430);">10</span>
<div class="b" style="left:27px;top:349px;width:24px;height:24px;background:#fff;border:2px solid #1b6339;box-sizing:border-box"><div class="b" style="left:2px;top:2px;width:16px;height:16px;background:#8ec3a5"></div></div>
<span class="t" style="left:56.0px;top:352.7px;font-size:16px;color:#5d9473;transform-origin:0 50%;transform:scaleX(0.7196);">Wenn möglich nach Ausführung automatisch auf Bezifferungsposition zuordnen, als DP buchen &amp; keine Task erstellen!</span>
<div class="b" style="left:15px;top:381px;width:948px;height:47px;background:#1b6339;"></div>
<span class="t" style="left:488.5px;top:396.3px;font-size:19px;color:#fff;transform:translateX(-50%) scaleX(0.7198);">Zahlung anweisen</span>
<div class="b" style="left:15px;top:434px;width:948px;height:47px;background:#1b6339;"></div>
<span class="t" style="left:488.5px;top:449.4px;font-size:19px;color:#fff;transform:translateX(-50%) scaleX(0.7219);">Schließen</span>
</div>
<svg style="left:0;top:0;pointer-events:none" width="1908" height="958" viewBox="0 0 1908 958"><rect x="439.3" y="198.7" width="993.5" height="516.4" fill="none" stroke="#ed1c24" stroke-width="7.2" stroke-linejoin="round"/></svg>
</body></html>
